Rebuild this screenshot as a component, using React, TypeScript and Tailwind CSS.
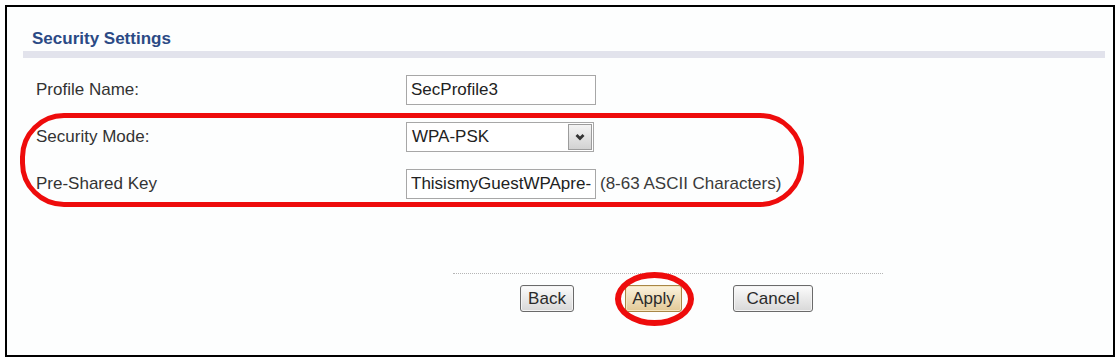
const fieldCls =
  "h-[30px] w-[190px] border border-[#a7a7a7] bg-white px-[4px] text-[17px] text-[#222] outline-none";

const Row = ({ label, children }: { label: string; children: React.ReactNode }) => (
  <div className="flex h-[30px] items-center">
    <div className="w-[370px] text-[17px] text-[#333]">{label}</div>
    <div className="flex items-center">{children}</div>
  </div>
);

const Btn = ({ label, w, active }: { label: string; w: string; active?: boolean }) => (
  <button
    className={
      active
        ? `${w} h-[27px] rounded-[3px] border border-[#a88646] bg-gradient-to-b from-[#fbf3de] to-[#e2c996] text-[17px] text-[#2a2a2a] shadow-[inset_0_0_0_1px_#f5e6c0]`
        : `${w} h-[27px] rounded-[3px] border border-[#6a6a6a] bg-gradient-to-b from-[#fcfcfc] to-[#d8d8d8] text-[17px] text-[#2a2a2a] shadow-[inset_0_0_0_1px_#f4f4f4]`
    }
  >
    {label}
  </button>
);

export default function App() {
  return (
    <div className="h-[362px] bg-white pl-[5px] pt-[5px]" style={{ fontFamily: '"Liberation Sans", Arial, sans-serif' }}>
      <div className="relative h-[352px] w-[1110px] border-2 border-black bg-[#fdfefe]">
        {/* Header */}
        <div className="ml-4 mr-2 pt-[22px]">
          <div className="pl-[9px] text-[17px] font-bold leading-[20px] text-[#2b4a85]">Security Settings</div>
          <div className="mt-[2px] h-[7px] bg-[#e2e3ec]" />
        </div>

        {/* Form rows */}
        <div className="flex flex-col gap-[17px] pl-[29px] pt-[17px]">
          <Row label="Profile Name:">
            <input className={fieldCls} readOnly value="SecProfile3" />
          </Row>
          <Row label="Security Mode:">
            <div className="flex h-[30px] w-[188px] items-center border border-[#a7a7a7] bg-white">
              <div className="flex-1 px-[5px] text-[17px] text-[#222]">WPA-PSK</div>
              <div className="mr-[1px] flex h-[26px] w-[24px] items-center justify-center border border-[#9c9c9c] bg-gradient-to-b from-[#f4f4f4] to-[#d2d2d2]">
                <svg width="12" height="12" viewBox="0 0 12 12">
                  <path d="M2.5 4 L6 7.5 L9.5 4" fill="none" stroke="#333" strokeWidth="2.8" />
                </svg>
              </div>
            </div>
          </Row>
          <Row label="Pre-Shared Key">
            <input className={fieldCls} readOnly value="ThisismyGuestWPApre-shared" />
            <span className="ml-[4px] text-[17px] text-[#3a3a3a]">(8-63 ASCII Characters)</span>
          </Row>
        </div>

        {/* Footer */}
        <div className="ml-[446px] mt-[74px] w-[430px] border-t border-dotted border-[#b5b5b5] pt-[11px]">
          <div className="flex gap-[51px] pl-[67px]">
            <Btn label="Back" w="w-[54px]" />
            <Btn label="Apply" w="w-[57px]" active />
            <Btn label="Cancel" w="w-[80px]" />
          </div>
        </div>

        {/* Red annotation marks */}
        <div className="pointer-events-none absolute left-[13px] top-[106px] h-[94px] w-[784px] rounded-[44px] border-[5px] border-[#ee0c0c]" />
        <div className="pointer-events-none absolute left-[608px] top-[265px] h-[54px] w-[79px] rounded-[50%] border-[6px] border-[#ee0c0c]" />
      </div>
    </div>
  );
}
